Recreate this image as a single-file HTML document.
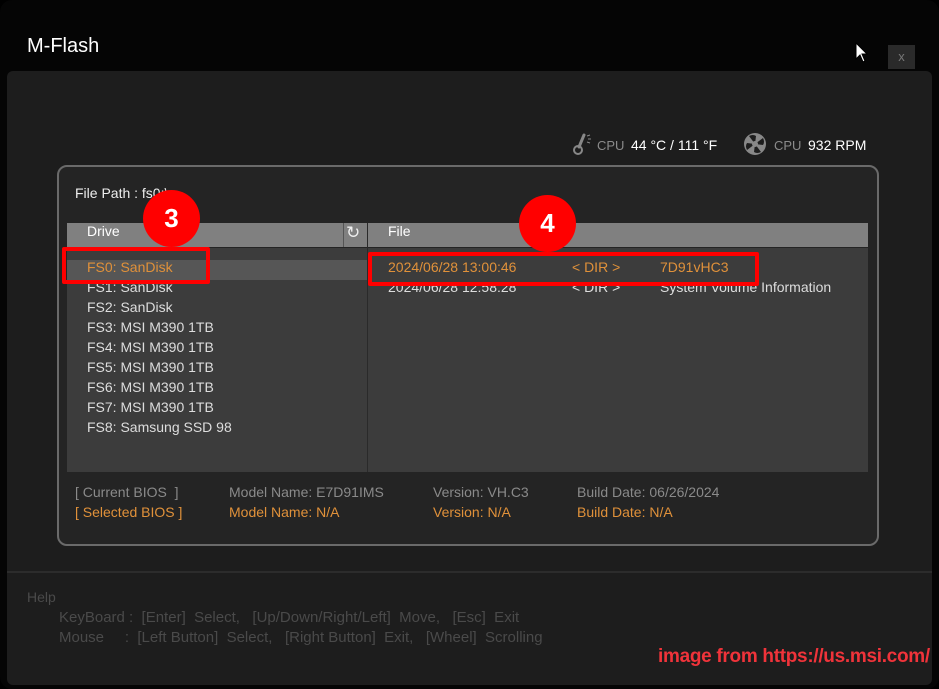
<!DOCTYPE html>
<html><head><meta charset="utf-8"><style>
*{margin:0;padding:0;box-sizing:border-box}
body{width:939px;height:689px;background:#000;position:relative;overflow:hidden;font-family:"Liberation Sans",sans-serif;font-size:14px;color:#ddd}
.a{position:absolute;white-space:nowrap}
.or{color:#e0913a}
.gr{color:#8a8a8a}
.hp{color:#4a4a4a;font-size:15px}
</style></head><body>
<div class="a" style="left:0;top:0;width:939px;height:689px;border-radius:12px;background:#050505"></div>
<div class="a" style="left:27px;top:35px;font-size:20px;color:#fff">M-Flash</div>
<svg class="a" style="left:855px;top:42px" width="14" height="22" viewBox="0 0 14 22"><path d="M1 1 L1 17 L5 13 L8 20 L10 19 L7 12 L12 12 Z" fill="#fff" stroke="#000" stroke-width="1"/></svg>
<div class="a" style="left:888px;top:45px;width:27px;height:24px;background:#2a2a2a;color:#777;font-size:13px;text-align:center;line-height:24px">x</div>
<div class="a" style="left:7px;top:71px;width:925px;height:614px;background:#1d1d1d;border-radius:6px"></div>
<svg class="a" style="left:573px;top:132px" width="22" height="24" viewBox="0 0 22 24"><path d="M11 3 L6 15" stroke="#888" stroke-width="3" stroke-linecap="round"/><circle cx="5" cy="18" r="4" fill="none" stroke="#888" stroke-width="2"/><path d="M14 4l3-1M15 7l3 0M14 10l3 1" stroke="#888" stroke-width="1"/></svg>
<div class="a gr" style="left:597px;top:138px;font-size:13px">CPU</div>
<div class="a" style="left:631px;top:137px;color:#fff">44 °C / 111 °F</div>
<svg class="a" style="left:743px;top:132px" width="24" height="24" viewBox="0 0 24 24"><circle cx="12" cy="12" r="11" fill="#888"/><g fill="#1d1d1d"><path d="M12 12 L6 4 Q10 2 13 4Z"/><path d="M12 12 L20 6 Q22 10 20 13Z"/><path d="M12 12 L18 20 Q14 22 11 20Z"/><path d="M12 12 L4 18 Q2 14 4 11Z"/></g><circle cx="12" cy="12" r="3" fill="#888"/></svg>
<div class="a gr" style="left:774px;top:138px;font-size:13px">CPU</div>
<div class="a" style="left:808px;top:137px;color:#fff">932 RPM</div>

<div class="a" style="left:57px;top:165px;width:822px;height:381px;border:2px solid #6a6a6a;border-radius:10px;background:#242424"></div>
<div class="a" style="left:75px;top:185px;color:#eee">File Path :  fs0:\</div>
<div class="a" style="left:67px;top:223px;width:801px;height:24px;background:#808080"></div>
<div class="a" style="left:343px;top:223px;width:1px;height:24px;background:#555"></div>
<div class="a" style="left:367px;top:223px;width:1px;height:249px;background:#2a2a2a"></div>
<div class="a" style="left:87px;top:220px;color:#fff;line-height:22px">Drive</div>
<div class="a" style="left:346px;top:223px;color:#eee;font-size:17px">&#8635;</div>
<div class="a" style="left:388px;top:220px;color:#fff;line-height:22px">File</div>
<div class="a" style="left:67px;top:248px;width:300px;height:224px;background:#3c3c3c"></div>
<div class="a" style="left:368px;top:248px;width:500px;height:224px;background:#3c3c3c"></div>
<div class="a" style="left:67px;top:260px;width:300px;height:20px;background:#565656"></div>
<div class="a" style="left:87px;top:257px;line-height:20px">
<div class="or">FS0: SanDisk</div><div>FS1: SanDisk</div><div>FS2: SanDisk</div><div>FS3: MSI M390 1TB</div><div>FS4: MSI M390 1TB</div><div>FS5: MSI M390 1TB</div><div>FS6: MSI M390 1TB</div><div>FS7: MSI M390 1TB</div><div>FS8: Samsung SSD 98</div></div>
<div class="a or" style="left:388px;top:257px;line-height:20px">2024/06/28 13:00:46</div>
<div class="a or" style="left:572px;top:257px;line-height:20px">&lt; DIR &gt;</div>
<div class="a or" style="left:660px;top:257px;line-height:20px">7D91vHC3</div>
<div class="a" style="left:388px;top:277px;line-height:20px">2024/06/28 12:58:28</div>
<div class="a" style="left:572px;top:277px;line-height:20px">&lt; DIR &gt;</div>
<div class="a" style="left:660px;top:277px;line-height:20px">System Volume Information</div>

<div class="a gr" style="left:75px;top:484px">[ Current BIOS&nbsp; ]</div>
<div class="a gr" style="left:229px;top:484px">Model Name: E7D91IMS</div>
<div class="a gr" style="left:433px;top:484px">Version: VH.C3</div>
<div class="a gr" style="left:577px;top:484px">Build Date: 06/26/2024</div>
<div class="a or" style="left:75px;top:504px">[ Selected BIOS ]</div>
<div class="a or" style="left:229px;top:504px">Model Name: N/A</div>
<div class="a or" style="left:433px;top:504px">Version: N/A</div>
<div class="a or" style="left:577px;top:504px">Build Date: N/A</div>

<div class="a" style="left:7px;top:571px;width:925px;height:2px;background:#2c2c2c"></div>
<div class="a hp" style="left:27px;top:589px;font-size:14px">Help</div>
<div class="a hp" style="left:59px;top:609px">KeyBoard :&nbsp; [Enter]&nbsp; Select,&nbsp;&nbsp; [Up/Down/Right/Left]&nbsp; Move,&nbsp;&nbsp; [Esc]&nbsp; Exit</div>
<div class="a hp" style="left:59px;top:629px">Mouse&nbsp;&nbsp;&nbsp;&nbsp; :&nbsp; [Left Button]&nbsp; Select,&nbsp;&nbsp; [Right Button]&nbsp; Exit,&nbsp;&nbsp; [Wheel]&nbsp; Scrolling</div>
<div class="a" style="left:658px;top:646px;color:#f0333a;font-weight:bold;font-size:19px;letter-spacing:-0.3px">image from https://us.msi.com/</div>

<div class="a" style="left:62px;top:247px;width:148px;height:37px;border:4px solid #f00;border-radius:2px"></div>
<div class="a" style="left:368px;top:252px;width:391px;height:34px;border:4px solid #f00;border-radius:2px"></div>
<div class="a" style="left:143px;top:190px;width:57px;height:57px;border-radius:50%;background:#f00;color:#fff;font-weight:bold;font-size:26px;text-align:center;line-height:57px">3</div>
<div class="a" style="left:519px;top:195px;width:57px;height:57px;border-radius:50%;background:#f00;color:#fff;font-weight:bold;font-size:26px;text-align:center;line-height:57px">4</div>
</body></html>
